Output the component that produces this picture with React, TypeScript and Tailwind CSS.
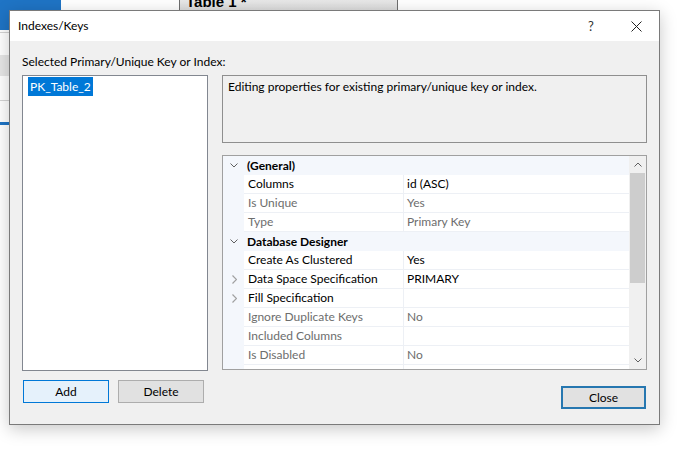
import { useState } from 'react';

type GridRow =
  | { kind: 'cat'; label: string }
  | { kind: 'prop'; name: string; value: string; dim?: boolean; expand?: boolean };

const ROWS: GridRow[] = [
  { kind: 'cat', label: '(General)' },
  { kind: 'prop', name: 'Columns', value: 'id (ASC)' },
  { kind: 'prop', name: 'Is Unique', value: 'Yes', dim: true },
  { kind: 'prop', name: 'Type', value: 'Primary Key', dim: true },
  { kind: 'cat', label: 'Database Designer' },
  { kind: 'prop', name: 'Create As Clustered', value: 'Yes' },
  { kind: 'prop', name: 'Data Space Specification', value: 'PRIMARY', expand: true },
  { kind: 'prop', name: 'Fill Specification', value: '', expand: true },
  { kind: 'prop', name: 'Ignore Duplicate Keys', value: 'No', dim: true },
  { kind: 'prop', name: 'Included Columns', value: '', dim: true },
  { kind: 'prop', name: 'Is Disabled', value: 'No', dim: true },
  { kind: 'prop', name: '', value: '', dim: true },
];

function ChevronDown({ color = '#606060' }: { color?: string }) {
  return (
    <svg width="8" height="5" viewBox="0 0 8 5">
      <path d="M0.5 0.5 L4 4 L7.5 0.5" fill="none" stroke={color} strokeWidth="1" />
    </svg>
  );
}

function ChevronRight({ color = '#a0a0a0' }: { color?: string }) {
  return (
    <svg width="5" height="9" viewBox="0 0 5 9">
      <path d="M0.5 0.5 L4.5 4.5 L0.5 8.5" fill="none" stroke={color} strokeWidth="1.2" />
    </svg>
  );
}

function ChevronUp({ color = '#606060' }: { color?: string }) {
  return (
    <svg width="8" height="5" viewBox="0 0 8 5">
      <path d="M0.5 4.5 L4 1 L7.5 4.5" fill="none" stroke={color} strokeWidth="1" />
    </svg>
  );
}

function PropertyGrid() {
  return (
    <div className="flex h-[215px] w-[425px] border border-[#a0a0a0] bg-white">
      <div className="flex-1 overflow-hidden">
        {ROWS.map((row, i) =>
          row.kind === 'cat' ? (
            <div key={i} className="flex h-[19px] items-center bg-[#f4f7fc]">
              <div className="flex w-[21px] justify-center pl-[1px]">
                <ChevronDown />
              </div>
              <span className="pl-[3px] font-bold text-black">{row.label}</span>
            </div>
          ) : (
            <div key={i} className="flex h-[19px]">
              <div className="flex w-[21px] shrink-0 items-center justify-center bg-[#f4f7fc] pl-[1px]">
                {row.expand && <ChevronRight />}
              </div>
              <div className="flex flex-1 border-b border-[#edf0f5]">
                <div
                  className={`flex w-[160px] items-center border-r border-[#edf0f5] pl-[4px] whitespace-nowrap ${
                    row.dim ? 'text-[#6d6d6d]' : 'text-black'
                  }`}
                >
                  {row.name}
                </div>
                <div
                  className={`flex flex-1 items-center pl-[3px] whitespace-nowrap ${
                    row.dim ? 'text-[#6d6d6d]' : 'text-black'
                  }`}
                >
                  {row.value}
                </div>
              </div>
            </div>
          )
        )}
      </div>
      {/* vertical scrollbar */}
      <div className="flex w-[17px] flex-col bg-[#f0f0f0]">
        <div className="flex h-[17px] items-center justify-center">
          <ChevronUp />
        </div>
        <div className="mx-[1px] h-[110px] bg-[#cdcdcd]" />
        <div className="flex-1" />
        <div className="flex h-[17px] items-center justify-center">
          <ChevronDown />
        </div>
      </div>
    </div>
  );
}

export default function App() {
  const [selected] = useState('PK_Table_2');

  return (
    <div className="relative h-[452px] w-[694px] overflow-hidden bg-white font-['Segoe_UI','Lato',sans-serif] text-[12px] leading-[14px] text-black">
      {/* designer window behind the dialog */}
      <div className="absolute left-0 top-0 h-[30px] w-[61px] bg-[#1f74c5]" />
      <div className="absolute left-0 top-[32px] h-[1px] w-[12px] bg-[#d4d4d4]" />
      <div className="absolute left-0 top-[55px] h-[21px] w-[12px] bg-[#e6e6e6]" />
      <div className="absolute left-0 top-[100px] h-[1px] w-[12px] bg-[#d4d4d4]" />
      <div className="absolute left-0 top-[122px] h-[3px] w-[12px] bg-[#1f74c5]" />
      <div className="absolute left-[179px] top-[-8px] flex h-[19px] w-[219px] items-end border-x border-b border-[#6e6e6e] bg-gradient-to-b from-[#f2f2f2] to-[#dcdcdc] pl-[6px] font-['Liberation_Sans',Arial,sans-serif] text-[15px] font-bold leading-[15px]">
        <span className="pb-[1px]">Table 1 *</span>
      </div>

      {/* Indexes/Keys dialog */}
      <div className="absolute left-[9px] top-[10px] flex h-[415px] w-[651px] flex-col border border-[#7a7a7a] bg-[#f0f0f0] shadow-[0_4px_16px_rgba(0,0,0,0.22)]">
        <div className="flex h-[30px] shrink-0 items-center bg-white pl-[8px]">
          <span className="flex-1">Indexes/Keys</span>
          <span className="w-[10px] text-center text-[13px] text-[#333]">?</span>
          <div className="ml-[35px] mr-[17px] flex items-center">
            <svg width="11" height="11" viewBox="0 0 11 11">
              <path d="M0.5 0.5 L10.5 10.5 M10.5 0.5 L0.5 10.5" stroke="#222" strokeWidth="1" />
            </svg>
          </div>
        </div>

        <div className="flex flex-1 flex-col pl-[12px] pr-[11px] pt-[14px]">
          <div className="mb-[6px] whitespace-nowrap">Selected Primary/Unique Key or Index:</div>

          <div className="flex gap-[14px]">
            {/* left column: list + buttons */}
            <div className="flex w-[186px] flex-col">
              <div className="h-[296px] border border-[#828790] bg-white pl-[5px] pt-[1px]">
                <span className="inline-block h-[19px] bg-[#0078d7] px-[2px] leading-[19px] text-white">
                  {selected}
                </span>
              </div>
              <div className="mt-[9px] flex gap-[9px] pl-[1px]">
                <button className="h-[23px] w-[86px] border border-[#0078d7] bg-[#e5f1fb] text-black">Add</button>
                <button className="h-[23px] w-[86px] border border-[#adadad] bg-[#e1e1e1] text-black">Delete</button>
              </div>
            </div>

            {/* right column: description, grid, close */}
            <div className="flex w-[425px] flex-col">
              <div className="h-[68px] border border-[#8f8f8f] bg-[#f0f0f0] pl-[5px] pt-[4px]">
                Editing properties for existing primary/unique key or index.
              </div>
              <div className="mt-[12px]">
                <PropertyGrid />
              </div>
              <div className="mt-[16px] flex justify-end pr-[1px]">
                <button className="h-[23px] w-[85px] border-2 border-[#2677b0] bg-[#e1e1e1] text-black">Close</button>
              </div>
            </div>
          </div>
        </div>
      </div>
    </div>
  );
}
